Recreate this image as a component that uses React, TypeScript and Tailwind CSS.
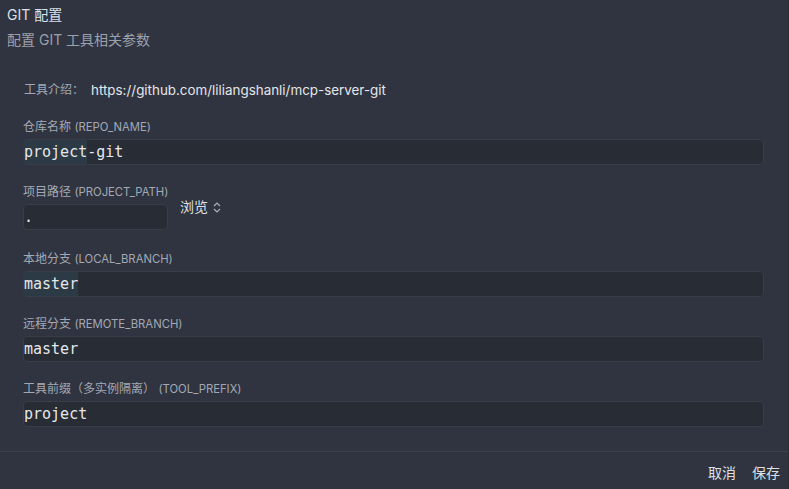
import React from 'react';

const mono = { fontFamily: '"DejaVu Sans Mono", "Liberation Mono", monospace' };

function Field({
  label,
  code,
  value,
  hl,
}: {
  label: string;
  code: string;
  value: string;
  hl?: string;
}) {
  const rest = hl ? value.slice(hl.length) : value;
  return (
    <div className="flex flex-col">
      <label className="text-[12px] leading-[16px] text-[#a3a9b4]">
        {label} <span className="text-[11.3px]">({code})</span>
      </label>
      <div className="mt-[4px] h-[26px] w-[741px] rounded-[4px] border border-[#383d48] bg-[#282c34] flex items-center">
        <span className="text-[15px] text-[#e6e8ec] leading-[24px] whitespace-pre" style={mono}>
          {hl && <span className="bg-[#2c3a45] inline-block rounded-l-[4px] -ml-px pl-px">{hl}</span>}
          {rest}
        </span>
      </div>
    </div>
  );
}

export default function App() {
  return (
    <div
      className="w-[789px] h-[489px] bg-[#303440] flex flex-col border-r border-[#2a2e38]"
      style={{ fontFamily: 'Inter, "Noto Sans CJK SC", sans-serif' }}
    >
      <div className="px-[7px] pt-[5px]">
        <div className="text-[14px] leading-[20px] text-[#dde0e5]">GIT 配置</div>
        <div className="mt-[5px] text-[14px] leading-[20px] text-[#9aa1ad]">配置 GIT 工具相关参数</div>
      </div>

      <div className="flex-1 px-[23px] pt-[30px]">
        <div className="flex items-center h-[20px] ml-px">
          <span className="text-[12px] text-[#a3a9b4] w-[67px]">工具介绍：</span>
          <span className="text-[13.4px] text-[#e4e6ea]">https://github.com/liliangshanli/mcp-server-git</span>
        </div>

        <div className="mt-[19px] flex flex-col gap-[19px]">
          <Field label="仓库名称" code="REPO_NAME" value="project-git" hl="project" />

          <div className="flex flex-col mb-[2px]">
            <label className="text-[12px] leading-[16px] text-[#a3a9b4]">
              项目路径 <span className="text-[11.3px]">(PROJECT_PATH)</span>
            </label>
            <div className="mt-[4px] flex items-start">
              <div className="h-[26px] w-[145px] rounded-[4px] border border-[#383d48] bg-[#282c34] flex items-center">
                <span className="text-[15px] text-[#e6e8ec]" style={mono}>.</span>
              </div>
              <button className="ml-[12px] -mt-[7px] flex items-center text-[14px] leading-[20px] text-[#dde0e5]">
                浏览
                <svg className="ml-[5px]" width="8" height="11" viewBox="0 0 8 11" fill="none" stroke="#aab0bb" strokeWidth="1.2">
                  <path d="M1 4 L4 1 L7 4" />
                  <path d="M1 7 L4 10 L7 7" />
                </svg>
              </button>
            </div>
          </div>

          <Field label="本地分支" code="LOCAL_BRANCH" value="master" hl="master" />
          <Field label="远程分支" code="REMOTE_BRANCH" value="master" />
          <Field label="工具前缀（多实例隔离）" code="TOOL_PREFIX" value="project" />
        </div>
      </div>

      <div className="border-t border-[#3b404c] h-[38px] flex items-center justify-end gap-[16px] pr-[8px] pt-[3px]">
        <button className="text-[14px] text-[#dde0e5]">取消</button>
        <button className="text-[14px] text-[#dde0e5]">保存</button>
      </div>
    </div>
  );
}
